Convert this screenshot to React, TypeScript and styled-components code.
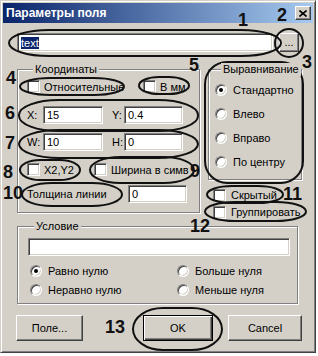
import React from 'react';
import styled, { createGlobalStyle } from 'styled-components';

const GlobalStyle = createGlobalStyle`
  html, body {
    margin: 0;
    padding: 0;
    background: #ffffff;
  }
  body {
    font-family: "Liberation Sans", Arial, sans-serif;
    font-size: 11px;
    color: #000;
  }
`;

const Window = styled.div`
  position: relative;
  box-sizing: border-box;
  width: 316px;
  height: 353px;
  background: #d4d0c8;
  border: 1px solid;
  border-color: #d4d0c8 #404040 #404040 #d4d0c8;
  box-shadow: inset 1px 1px 0 #ffffff, inset -1px -1px 0 #808080;
  padding: 2px;
  display: flex;
  flex-direction: column;
`;

const TitleBar = styled.div`
  height: 20px;
  display: flex;
  align-items: center;
  justify-content: space-between;
  padding: 0 2px 0 3px;
  background: linear-gradient(to right, #0a246a, #a6caf0);
`;

const Title = styled.span`
  color: #fff;
  font-weight: bold;
  font-size: 12px;
`;

const CloseButton = styled.div`
  box-sizing: border-box;
  width: 16px;
  height: 14px;
  display: flex;
  align-items: center;
  justify-content: center;
  background: #d4d0c8;
  border: 1px solid;
  border-color: #ffffff #404040 #404040 #ffffff;
  box-shadow: inset -1px -1px 0 #808080;
`;

const Body = styled.div`
  padding: 10px 0 0 14px;
  display: flex;
  flex-direction: column;
`;

const FieldRow = styled.div`
  display: flex;
  gap: 6px;
  height: 19px;
`;

const Sunken = styled.div<{ $w: number; $h?: number }>`
  box-sizing: border-box;
  width: ${(p) => p.$w}px;
  height: ${(p) => p.$h ?? 18}px;
  background: #fff;
  border: 1px solid;
  border-color: #808080 #ffffff #ffffff #808080;
  box-shadow: inset 1px 1px 0 #404040, inset -1px -1px 0 #d4d0c8;
  padding: 0 3px;
  display: flex;
  align-items: center;
  font-size: 11px;
  white-space: nowrap;
  overflow: hidden;
`;

const Selected = styled.span`
  background: #0a246a;
  color: #fff;
`;

const Button = styled.div<{ $w: number; $h?: number; $default?: boolean }>`
  box-sizing: border-box;
  width: ${(p) => p.$w}px;
  height: ${(p) => p.$h ?? 26}px;
  display: flex;
  align-items: center;
  justify-content: center;
  background: #d4d0c8;
  font-size: 11px;
  border: 1px solid;
  border-color: ${(p) => (p.$default ? '#000' : '#ffffff #404040 #404040 #ffffff')};
  box-shadow: ${(p) =>
    p.$default
      ? 'inset 1px 1px 0 #ffffff, inset -1px -1px 0 #404040, inset -2px -2px 0 #808080'
      : 'inset -1px -1px 0 #808080'};
`;

const DotsButton = styled(Button)`
  align-items: flex-end;
  padding-bottom: 3px;
  line-height: 1;
`;

const MainRow = styled.div`
  display: flex;
  margin-top: 11px;
  align-items: flex-start;
`;

const Group = styled.fieldset<{ $w: number; $h: number; $pl: number }>`
  box-sizing: border-box;
  margin: 0;
  width: ${(p) => p.$w}px;
  height: ${(p) => p.$h}px;
  padding: 0 0 0 ${(p) => p.$pl}px;
  border: 1px solid #808080;
  box-shadow: inset 1px 1px 0 #ffffff, 1px 1px 0 #ffffff;
  display: flex;
  flex-direction: column;
`;

const Legend = styled.legend<{ $lh?: number }>`
  position: relative;
  z-index: 1;
  margin-left: 6px;
  padding: 0 2px;
  background: #d4d0c8;
  line-height: ${(p) => p.$lh ?? 13}px;
  font-size: 11px;
`;

const Row = styled.div<{ $mt: number; $h: number }>`
  display: flex;
  align-items: center;
  height: ${(p) => p.$h}px;
  margin-top: ${(p) => p.$mt}px;
`;

const Cell = styled.div<{ $w?: number; $ml?: number }>`
  display: flex;
  align-items: center;
  gap: 4px;
  width: ${(p) => (p.$w ? `${p.$w}px` : 'auto')};
  margin-left: ${(p) => p.$ml ?? 0}px;
  flex-shrink: 0;
  white-space: nowrap;
`;

const Check = styled.span`
  box-sizing: border-box;
  width: 13px;
  height: 13px;
  flex-shrink: 0;
  background: #fff;
  border: 1px solid;
  border-color: #808080 #ffffff #ffffff #808080;
  box-shadow: inset 1px 1px 0 #404040, inset -1px -1px 0 #d4d0c8;
`;

const Radio = styled.span<{ $on?: boolean }>`
  position: relative;
  box-sizing: border-box;
  width: 12px;
  height: 12px;
  flex-shrink: 0;
  border-radius: 50%;
  background: #fff;
  border: 1px solid;
  border-color: #808080 #ffffff #ffffff #808080;
  box-shadow: inset 1px 1px 0 #404040, inset -1px -1px 0 #d4d0c8;
  &::after {
    content: '';
    display: ${(p) => (p.$on ? 'block' : 'none')};
    position: absolute;
    left: 3px;
    top: 3px;
    width: 4px;
    height: 4px;
    border-radius: 50%;
    background: #000;
  }
`;

const Label = styled.span<{ $w: number }>`
  width: ${(p) => p.$w}px;
  flex-shrink: 0;
`;

const RightColumn = styled.div`
  margin-left: 8px;
  width: 92px;
  display: flex;
  flex-direction: column;
`;

const RadioRow = styled.div`
  display: flex;
  align-items: center;
  gap: 6px;
  height: 24px;
`;

const RadioList = styled.div`
  margin-top: 2px;
  display: flex;
  flex-direction: column;
`;

const FlagRow = styled.div<{ $mt: number }>`
  display: flex;
  align-items: center;
  gap: 5px;
  height: 16px;
  padding-left: 5px;
  margin-top: ${(p) => p.$mt}px;
`;

const ConditionGrid = styled.div`
  margin-top: 6px;
  margin-left: 2px;
  display: grid;
  grid-template-columns: 147px auto;
  grid-auto-rows: 18px;
  row-gap: 1px;
`;

const GridRadio = styled.div`
  display: flex;
  align-items: center;
  gap: 6px;
`;

const ButtonRow = styled.div`
  display: flex;
  margin-top: 11px;
  margin-left: -1px;
`;

const Spacer = styled.div<{ $w: number }>`
  width: ${(p) => p.$w}px;
`;

const Overlay = styled.svg`
  position: absolute;
  left: -1px;
  top: -1px;
  width: 318px;
  height: 356px;
  pointer-events: none;
`;

const Num = styled.div<{ $x: number; $y: number }>`
  position: absolute;
  left: ${(p) => p.$x - 1}px;
  top: ${(p) => p.$y - 1}px;
  font-family: "Liberation Sans", Arial, sans-serif;
  font-weight: bold;
  font-size: 18px;
  line-height: 18px;
  color: #111;
`;

// annotation shapes: x, y, width, height, rx, ry
const marks: [number, number, number, number, number, number][] = [
  [9, 30, 272, 26, 40, 13],
  [20, 78, 104, 17, 30, 9],
  [139, 77, 50, 17, 20, 9],
  [19, 100, 179, 31, 40, 15],
  [19, 130, 179, 28, 40, 14],
  [20, 160, 60, 20, 20, 10],
  [90, 157, 104, 26, 30, 13],
  [22, 183, 100, 23, 30, 12],
  [205, 62, 98, 121, 22, 22],
  [207, 186, 76, 17, 25, 9],
  [205, 202, 101, 19, 30, 10],
  [133, 308, 89, 42, 30, 21],
];

const numbers: [string, number, number][] = [
  ['1', 238, 11],
  ['2', 277, 6],
  ['3', 302, 53],
  ['4', 6, 69],
  ['5', 189, 56],
  ['6', 5, 104],
  ['7', 5, 134],
  ['8', 3, 163],
  ['9', 190, 162],
  ['10', 3, 184],
  ['11', 283, 185],
  ['12', 190, 217],
  ['13', 105, 318],
];

export default function App() {
  return (
    <>
      <GlobalStyle />
      <Window>
        <TitleBar>
          <Title>Параметры поля</Title>
          <CloseButton>
            <svg width="8" height="7" viewBox="0 0 8 7">
              <path d="M0.5 0.5 L7.5 6.5 M7.5 0.5 L0.5 6.5" stroke="#000" strokeWidth="1.6" />
            </svg>
          </CloseButton>
        </TitleBar>
        <Body>
          <FieldRow>
            <Sunken $w={256} $h={19}>
              <Selected>text</Selected>
            </Sunken>
            <DotsButton $w={20} $h={19}>...</DotsButton>
          </FieldRow>

          <MainRow>
            <Group $w={183} $h={150} $pl={9}>
              <Legend>Координаты</Legend>
              <Row $mt={2} $h={17}>
                <Cell $w={116}>
                  <Check />
                  Относительные
                </Cell>
                <Cell>
                  <Check />
                  В мм
                </Cell>
              </Row>
              <Row $mt={11} $h={18}>
                <Label $w={16}>X:</Label>
                <Sunken $w={60}>15</Sunken>
                <Cell $ml={9}>
                  <Label $w={12}>Y:</Label>
                </Cell>
                <Sunken $w={59}>0.4</Sunken>
              </Row>
              <Row $mt={9} $h={18}>
                <Label $w={16}>W:</Label>
                <Sunken $w={60}>10</Sunken>
                <Cell $ml={9}>
                  <Label $w={12}>H:</Label>
                </Cell>
                <Sunken $w={59}>0</Sunken>
              </Row>
              <Row $mt={10} $h={17}>
                <Cell $w={67}>
                  <Check />
                  X2,Y2
                </Cell>
                <Cell>
                  <Check />
                  Ширина в симв
                </Cell>
              </Row>
              <Row $mt={7} $h={18}>
                <Label $w={101}>Толщина линии</Label>
                <Sunken $w={59}>0</Sunken>
              </Row>
            </Group>

            <RightColumn>
              <Group $w={92} $h={117} $pl={6}>
                <Legend>Выравнивание</Legend>
                <RadioList>
                  <RadioRow>
                    <Radio $on />
                    Стандартно
                  </RadioRow>
                  <RadioRow>
                    <Radio />
                    Влево
                  </RadioRow>
                  <RadioRow>
                    <Radio />
                    Вправо
                  </RadioRow>
                  <RadioRow>
                    <Radio />
                    По центру
                  </RadioRow>
                </RadioList>
              </Group>
              <FlagRow $mt={7}>
                <Check />
                Скрытый
              </FlagRow>
              <FlagRow $mt={1}>
                <Check />
                Группировать
              </FlagRow>
            </RightColumn>
          </MainRow>

          <Group $w={281} $h={84} $pl={10}>
            <Legend $lh={12}>Условие</Legend>
            <Sunken $w={262} style={{ marginTop: 6 }} />
            <ConditionGrid>
              <GridRadio>
                <Radio $on />
                Равно нулю
              </GridRadio>
              <GridRadio>
                <Radio />
                Больше нуля
              </GridRadio>
              <GridRadio>
                <Radio />
                Неравно нулю
              </GridRadio>
              <GridRadio>
                <Radio />
                Меньше нуля
              </GridRadio>
            </ConditionGrid>
          </Group>

          <ButtonRow>
            <Button $w={67}>Поле...</Button>
            <Spacer $w={60} />
            <Button $w={70} $default>
              OK
            </Button>
            <Spacer $w={15} />
            <Button $w={74}>Cancel</Button>
          </ButtonRow>
        </Body>

        <Overlay viewBox="0 0 318 356">
          {marks.map(([x, y, w, h, rx, ry], i) => (
            <rect key={i} x={x} y={y} width={w} height={h} rx={rx} ry={ry} fill="none" stroke="#111" strokeWidth="2" />
          ))}
          <ellipse cx="289" cy="43" rx="14" ry="14" fill="none" stroke="#111" strokeWidth="2" />
        </Overlay>
        {numbers.map(([t, x, y]) => (
          <Num key={t} $x={x} $y={y}>
            {t}
          </Num>
        ))}
      </Window>
    </>
  );
}
